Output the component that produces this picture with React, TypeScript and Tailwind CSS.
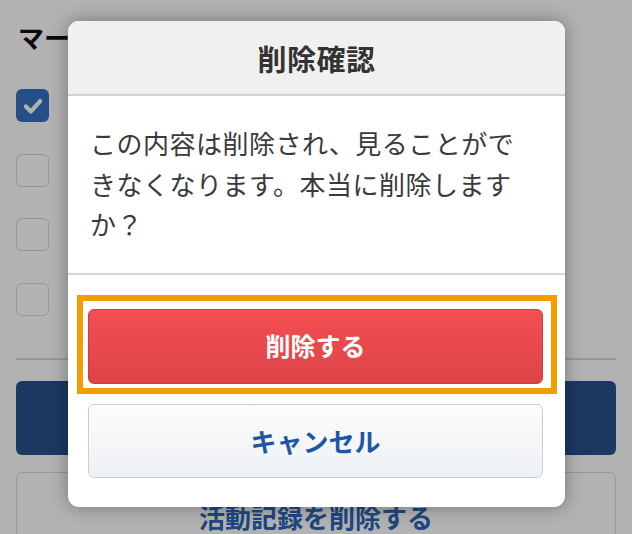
import React from "react";

const font = { fontFamily: '"Noto Sans CJK JP", "Noto Sans", sans-serif' };

function Checkbox({ checked }: { checked?: boolean }) {
  if (checked) {
    return (
      <div className="w-[33px] h-[33px] rounded-[6px] bg-[#3571c1] flex items-center justify-center">
        <svg width="22" height="22" viewBox="0 0 20 20">
          <polyline points="3.5,10.5 8,15 16.5,5.5" fill="none" stroke="white" strokeWidth="3.8" strokeLinecap="round" strokeLinejoin="round" />
        </svg>
      </div>
    );
  }
  return <div className="w-[33px] h-[33px] rounded-[6px] border-[1.5px] border-[#d8d8d8] bg-white" />;
}

export default function App() {
  return (
    <div className="relative w-[632px] h-[534px] overflow-hidden bg-white" style={font}>
      {/* background page */}
      <div className="flex flex-col px-4 pt-[23px]">
        <div className="pl-[2px] text-[26px] leading-[28px] font-bold text-[#111]">マーク</div>
        <div className="mt-[38px] flex flex-col gap-[31.5px]">
          <Checkbox checked />
          <Checkbox />
          <Checkbox />
          <Checkbox />
        </div>
        <div className="mt-[42px] h-[2px] bg-[#dcdcdc]" />
        <div className="mt-[21px] h-[74px] rounded-[6px] bg-[#28518f]" />
        <div className="mt-[17px] h-[80px] rounded-[6px] border-[1.5px] border-[#dcdcdc] bg-white flex justify-center pt-[29px]">
          <span className="text-[26px] leading-[30px] font-bold text-[#2c66b8]">活動記録を削除する</span>
        </div>
      </div>

      {/* overlay */}
      <div className="absolute inset-0 bg-black/30" />

      {/* dialog */}
      <div className="absolute left-[68px] top-[21px] w-[497px] h-[486px] rounded-[11px] bg-white overflow-hidden shadow-[0_0_18px_rgba(0,0,0,0.35)] flex flex-col">
        <div className="h-[75px] shrink-0 bg-[#f0f0f0] border-b-[2px] border-[#d2d2d2] flex items-center justify-center">
          <span className="text-[29px] leading-[34px] font-bold text-[#333] tracking-[0.5px]">削除確認</span>
        </div>
        <div className="pl-[22px] pr-[34px] pt-[27px] pb-[28px] border-b-[2px] border-[#d6d6d6]">
          <p className="text-[26px] leading-[40.5px] tracking-[0.5px] text-[#3a3a3a]">
            この内容は削除され、見ることができなくなります。本当に削除しますか？
          </p>
        </div>
        <div className="flex flex-col pl-[20px] pr-[22px] pt-[34px] gap-[20px]">
          <div className="relative">
            <div className="absolute -left-[11px] -top-[14px] -right-[14px] -bottom-[10px] border-[6px] border-[#f29d00]" />
            <button className="relative w-full h-[75px] rounded-[6px] border border-[#d13b40] bg-gradient-to-b from-[#f24f52] to-[#de4347] text-white text-[25px] font-bold flex items-center justify-center">
              削除する
            </button>
          </div>
          <button className="w-full h-[74px] rounded-[6px] border-[1.5px] border-[#cbced2] bg-gradient-to-b from-[#fbfcfd] to-[#eef1f4] text-[#1d56a5] text-[26px] font-bold flex items-center justify-center">
            キャンセル
          </button>
        </div>
      </div>
    </div>
  );
}
